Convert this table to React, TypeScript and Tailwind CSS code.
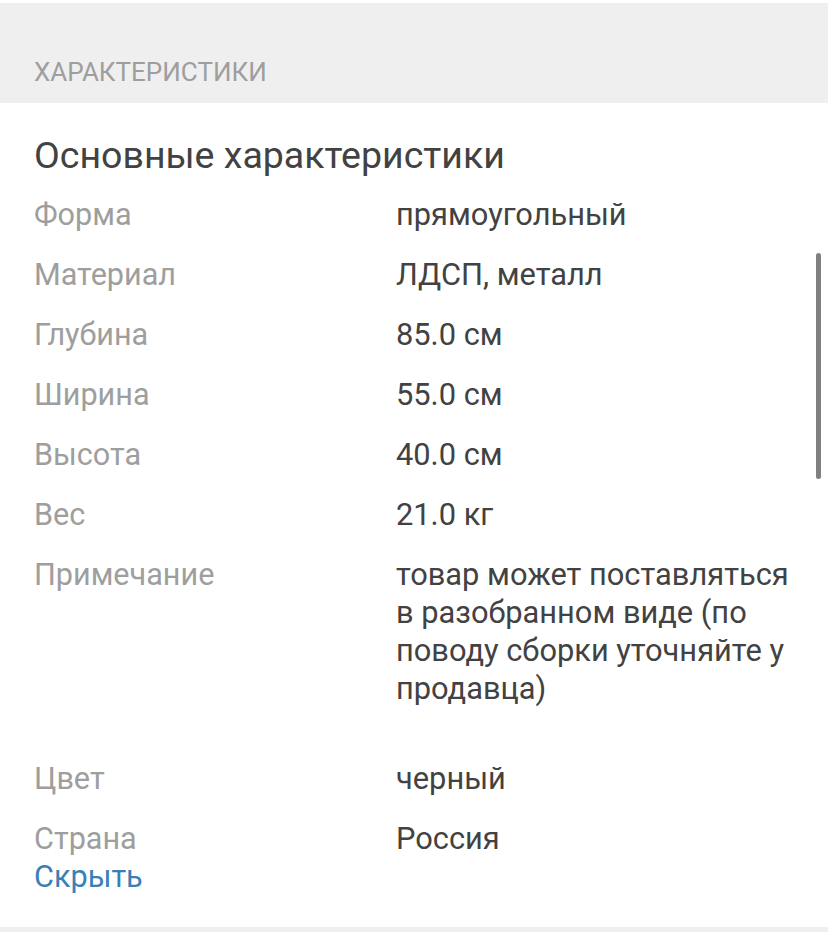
const specs: { label: string; value: string; extra?: boolean }[] = [
  { label: 'Форма', value: 'прямоугольный' },
  { label: 'Материал', value: 'ЛДСП, металл' },
  { label: 'Глубина', value: '85.0 см' },
  { label: 'Ширина', value: '55.0 см' },
  { label: 'Высота', value: '40.0 см' },
  { label: 'Вес', value: '21.0 кг' },
  {
    label: 'Примечание',
    value: 'товар может поставляться в разобранном виде (по поводу сборки уточняйте у продавца)',
    extra: true,
  },
  { label: 'Цвет', value: 'черный' },
  { label: 'Страна', value: 'Россия' },
];

export default function App() {
  return (
    <div className="relative w-[828px] h-[932px] bg-white overflow-hidden font-['Roboto',sans-serif] pt-[3px]">
      {/* Заголовок секции */}
      <div className="h-[100px] bg-[#efefef] px-[34px] pt-[54px]">
        <h2 className="text-[26px] leading-[30px] text-[#9e9e9e]">ХАРАКТЕРИСТИКИ</h2>
      </div>

      <div className="px-[34px] pt-[32px]">
        <h3 className="text-[37.5px] leading-[40px] text-[#424242] mb-[21px]">Основные характеристики</h3>

        <dl>
          {specs.map((s, i) => (
            <div
              key={s.label}
              className={
                'grid grid-cols-[362px_1fr] ' +
                (i === specs.length - 1 ? 'pb-0' : s.extra ? 'pb-[52px]' : 'pb-[22px]')
              }
            >
              <dt className="text-[30.6px] leading-[38px] text-[#9e9e9e]">{s.label}</dt>
              <dd className="text-[30.8px] leading-[38px] text-[#424242]">{s.value}</dd>
            </div>
          ))}
        </dl>

        <button className="text-[30.6px] leading-[38px] text-[#3a7fb8]">Скрыть</button>
      </div>

      <div className="absolute left-0 right-0 bottom-0 h-[5px] bg-[#efefef]" />

      {/* полоса прокрутки */}
      <div className="absolute right-[7px] top-[253px] w-[5px] h-[226px] rounded-full bg-[#808080]" />
    </div>
  );
}
